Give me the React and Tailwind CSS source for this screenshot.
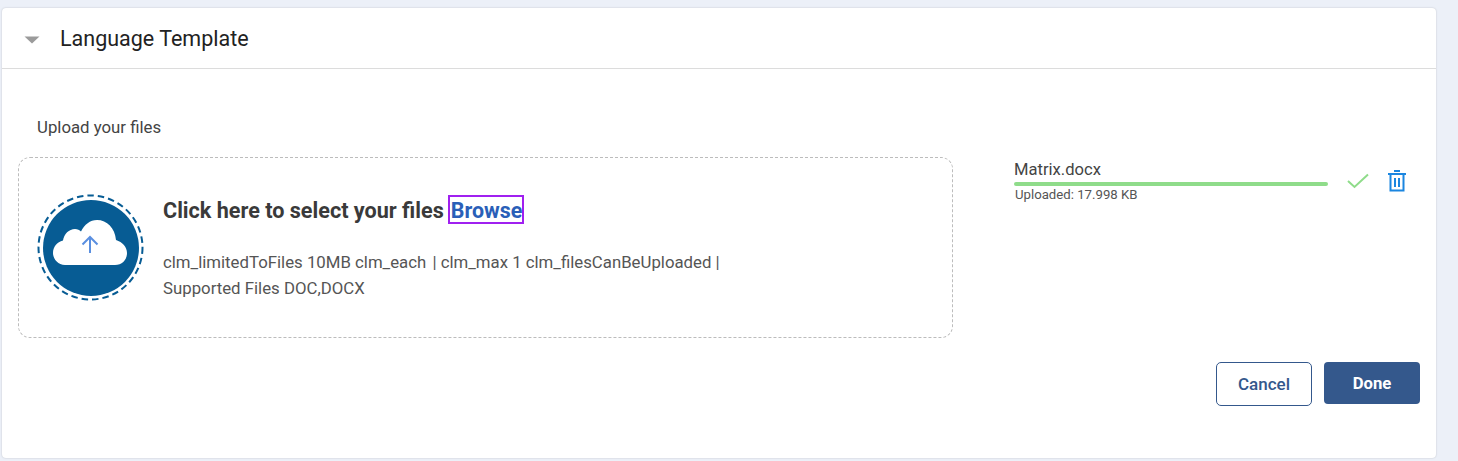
export default function App() {
  return (
    <div className="h-[461px] w-[1458px] overflow-hidden bg-[#ecf0f8] pl-[2px] pt-2 font-['Roboto',sans-serif]">
      <div className="h-[450px] w-[1434px] rounded-[4px] bg-white shadow-[0_0_2px_rgba(0,0,0,0.2)]">
        {/* Header */}
        <div className="flex h-[61px] items-center border-b border-[#dcdcdc] pl-[22px]">
          <svg width="16" height="8" viewBox="0 0 16 8" className="mt-[4px]">
            <path d="M0.5 0.5H15.5L8 7.5Z" fill="#9b9b9b" />
          </svg>
          <h2 className="ml-[20px] mt-[1px] text-[21.5px] leading-[28px] text-[#222222]">Language Template</h2>
        </div>

        <div className="pl-[16px] pr-[16px]">
          <p className="ml-[19px] mt-[48px] text-[16.8px] leading-[20px] text-[#444444]">Upload your files</p>

          <div className="mt-[20px] flex items-start">
            {/* Drop zone */}
            <div className="flex h-[181px] w-[935px] items-center rounded-[12px] border border-dashed border-[#bcbcbc] pl-[18px]">
              <div className="relative flex h-[107px] w-[107px] shrink-0 items-center justify-center">
                <svg width="107" height="107" viewBox="0 0 107 107" className="absolute inset-0">
                  <circle cx="53.5" cy="53.5" r="52" fill="none" stroke="#075c94" strokeWidth="2" strokeDasharray="6.5 4" />
                </svg>
                <div className="flex h-[96px] w-[96px] items-center justify-center rounded-full bg-[#075c94]">
                  <svg width="74" height="45" viewBox="0 0 74 45" className="mb-[11px] mr-[2px]">
                    <path
                      d="M12 45C5 45 0 39 0 33C0 27 4 22 10 20.500C11 14 16 9 22 9C24.500 9 26.500 10 28 11.500C31.500 4.500 37 0 44 0C54 0 62 8 63 20C69.500 22 74 27 74 33C74 40 69 45 62 45Z"
                      fill="#ffffff"
                    />
                    <path
                      d="M37 33V17.500M29.500 24.500L37 17L44.500 24.500"
                      fill="none"
                      stroke="#5a8fe0"
                      strokeWidth="2"
                    />
                  </svg>
                </div>
              </div>

              <div className="ml-[19px] self-start pt-[37px]">
                <div className="flex items-center text-[21.6px] font-bold leading-[23px] text-[#3a3a3a]">
                  <span className="pt-[2px]">Click here to select your files</span>
                  <span className="ml-[4px] border-2 border-[#a020f0] pl-[1px] pt-[2px] text-[21.4px] text-[#2a5fb8]">Browse</span>
                </div>
                <p className="mt-[25px] w-[600px] text-[16.8px] leading-[26px] text-[#555555]">
                  clm_limitedToFiles 10MB clm_each <span className="ml-[2px]">|</span> clm_max 1 clm_filesCanBeUploaded |
                  <br />
                  Supported Files DOC,DOCX
                </p>
              </div>
            </div>

            {/* Uploaded file */}
            <div className="ml-[61px] flex items-start">
              <div className="w-[314px] pt-[3px]">
                <div className="text-[16.6px] leading-[19px] text-[#444444]">Matrix.docx</div>
                <div className="mt-[3px] h-[4px] rounded-full bg-[#8fdc8a]" />
                <div className="ml-[1px] mt-[1px] text-[13.2px] leading-[15px] text-[#555555]">Uploaded: 17.998 KB</div>
              </div>
              <svg width="22" height="16" viewBox="0 0 22 16" className="ml-[19px] mt-[16px]">
                <path d="M1 8L7.500 14L21 1.500" fill="none" stroke="#8fdc8a" strokeWidth="2" />
              </svg>
              <svg width="18" height="22" viewBox="0 0 18 22" className="ml-[19px] mt-[13px]">
                <path
                  d="M0 4H18M6 1H12M2.500 4V20.500H15.500V4M7 8V17M11 8V17"
                  fill="none"
                  stroke="#1b86e0"
                  strokeWidth="2"
                />
              </svg>
            </div>
          </div>

          {/* Actions */}
          <div className="mt-[24px] flex justify-end gap-3">
            <button className="h-[44px] w-[96px] rounded-[5px] border border-[#34588c] bg-white pt-[1px] text-[17px] font-medium text-[#34588c]">
              Cancel
            </button>
            <button className="h-[42px] w-[96px] rounded-[4px] bg-[#34588c] pt-[1px] text-[16.7px] font-bold text-white">
              Done
            </button>
          </div>
        </div>
      </div>
    </div>
  );
}
